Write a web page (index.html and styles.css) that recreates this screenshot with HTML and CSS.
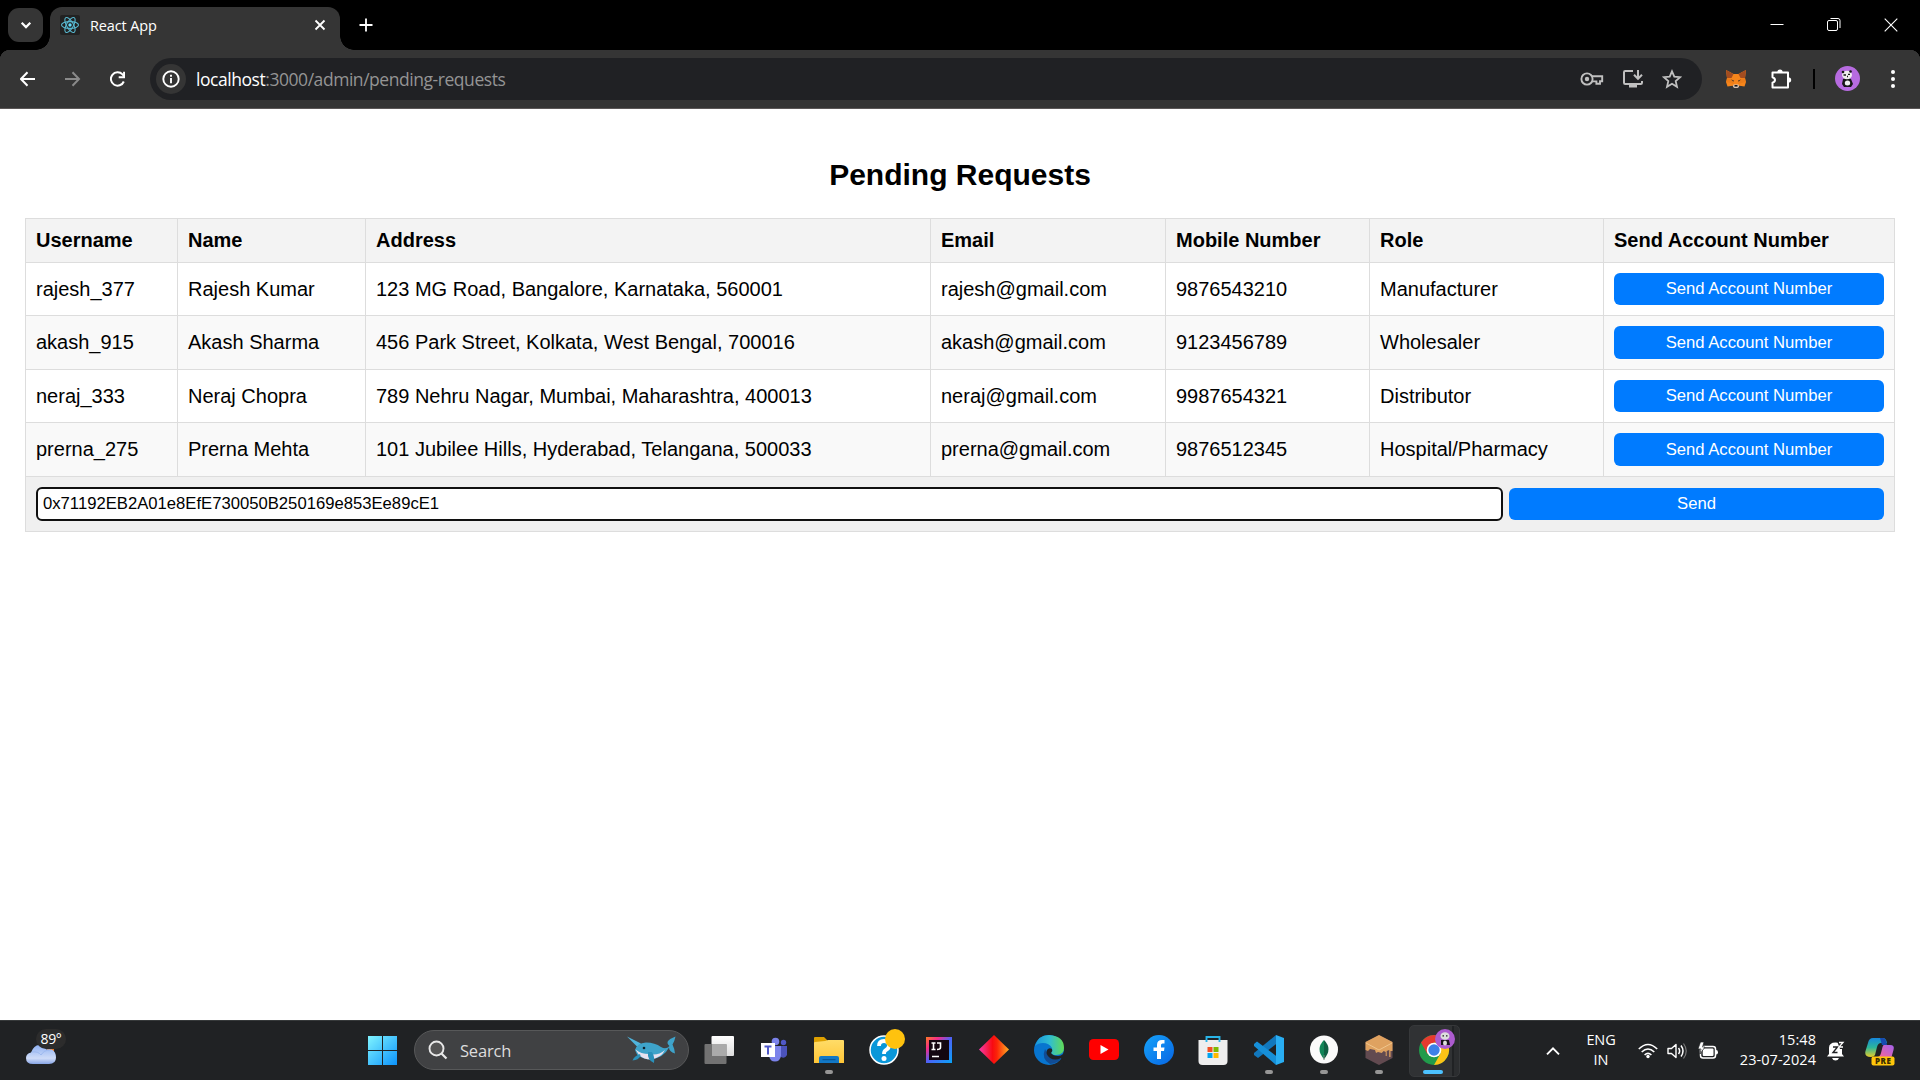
FILE: index.html
```html
<!DOCTYPE html>
<html lang="en">
<head>
<meta charset="utf-8">
<title>React App</title>
<link rel="stylesheet" href="styles.css">
</head>
<body>
<header class="tabstrip">
  <button class="tab-search" aria-label="Search tabs"><svg width="12" height="12" viewBox="0 0 12 12"><path d="M1.700 3.800 6 8.100l4.300-4.300" fill="none" stroke="#fff" stroke-width="2.200"/></svg></button>
  <div class="tab">
    <svg class="favicon" width="20" height="20" viewBox="0 0 20 20"><rect width="20" height="20" rx="2" fill="#222"/><g fill="none" stroke="#58b9d1" stroke-width="1.100"><ellipse cx="10" cy="10" rx="8.500" ry="3.400"/><ellipse cx="10" cy="10" rx="8.500" ry="3.400" transform="rotate(60 10 10)"/><ellipse cx="10" cy="10" rx="8.500" ry="3.400" transform="rotate(120 10 10)"/></g><circle cx="10" cy="10" r="1.700" fill="#61dafb"/></svg>
    <span class="tab-title">React App</span>
    <svg class="tab-close" width="12" height="12" viewBox="0 0 12 12"><path d="m1.500 1.500 9 9m0-9-9 9" stroke="#fff" stroke-width="1.800"/></svg>
  </div>
  <svg class="new-tab" width="14" height="14" viewBox="0 0 14 14"><path d="M7 .5v13M.5 7h13" stroke="#fff" stroke-width="1.800"/></svg>
  <div class="window-controls">
    <svg width="14" height="14" viewBox="0 0 14 14"><path d="M.5 6.500h13" stroke="#fff"/></svg>
    <svg width="14" height="14" viewBox="0 0 14 14"><rect x=".5" y="2.500" width="10" height="10" rx="1.500" fill="none" stroke="#fff"/><path d="M3.500.5H11q2 0 2 2V10" fill="none" stroke="#fff"/></svg>
    <svg width="14" height="14" viewBox="0 0 14 14"><path d="m.7.7 12.600 12.600m0-12.600L.7 13.300" stroke="#fff" stroke-width="1.100"/></svg>
  </div>
</header>
<nav class="toolbar">
  <svg class="nav-icon" width="16" height="16" viewBox="0 0 16 16"><path d="M15 8H1.500M7.500 1.300 1 8l6.500 6.700" fill="none" stroke="#fff" stroke-width="2"/></svg>
  <svg class="nav-icon" width="16" height="16" viewBox="0 0 16 16"><path d="M0 8h13.500M7.500 1.300 14 8l-6.500 6.700" fill="none" stroke="#8a8a8a" stroke-width="2"/></svg>
  <svg class="nav-icon reload" width="16" height="16" viewBox="0 0 16 16"><path d="M13.800 10.500A6.700 6.700 0 1 1 12.500 3.400l1.500 1.800" fill="none" stroke="#fff" stroke-width="2"/><path d="M15 .8v6.400H8.700V5.300h4.400V.8z" fill="#fff"/></svg>
  <div class="omnibox">
    <span class="site-info"><svg width="18" height="18" viewBox="0 0 18 18"><circle cx="9" cy="9" r="7.700" fill="none" stroke="#fff" stroke-width="1.900"/><path d="M9 8v5.200M9 4.800v2" stroke="#fff" stroke-width="1.900"/></svg></span>
    <span class="url"><b>localhost</b>:3000/admin/pending-requests</span>
    <svg width="24" height="14" viewBox="0 0 24 14"><g fill="none" stroke="#c0c0c0" stroke-width="1.900"><circle cx="7" cy="7" r="5.600"/><path d="M12 4.300h10.200v5h-2.200v2.500h-3.600V9.400H12"/></g><circle cx="7" cy="7" r="2.200" fill="#c0c0c0"/></svg>
    <svg width="22" height="20" viewBox="0 0 22 20"><path d="M11 2H3.200Q2 2 2 3.200v10.600Q2 15 3.200 15h15.600q1.200 0 1.200-1.200V12M16 1v8.500m-4-3.700 4 4 4-4" fill="none" stroke="#c0c0c0" stroke-width="2"/><path d="M7 15h8v3.500H7z" fill="#c0c0c0"/></svg>
    <svg width="20" height="20" viewBox="0 0 20 20"><path d="m10 2.300 2.300 5.400 5.800.5-4.400 3.900 1.300 5.700-5-3-5 3 1.300-5.700-4.400-3.900 5.800-.5z" fill="none" stroke="#c0c0c0" stroke-width="1.800"/></svg>
  </div>
  <svg class="fox" width="20" height="20" viewBox="0 0 20 20"><path d="m0 1 7.500 4h5L20 1l-1 8 1 4-1.500 4.500-5-.8-2 2h-3l-2-2-5 .8L0 13l1-4z" fill="#f6851b"/><path d="m0 1 7.500 4-2 4L1 9zm20 0-7.500 4 2 4L19 9z" fill="#a34c20"/><path d="m1 9 5 1 2 5-7.500-2zm18 0-5 1-2 5 7.500-2z" fill="#ec7c18"/><path d="m5 10.500 3 1-.5 1.200zm10 0-3 1 .5 1.200z" fill="#4a3325"/><path d="M7.500 15.500h5l.5 2.500-1.500 1h-3L7 18z" fill="#d5c3b5"/><path d="M8.500 16h3v1.600h-3z" fill="#161616"/></svg>
  <svg class="puzzle" width="22" height="22" viewBox="0 0 22 22"><path d="M2.500 4.500h15.500v15H2.500v-4.700c3.300-1.300 3.300-4.300 0-5.600z" fill="none" stroke="#fff" stroke-width="2" stroke-linejoin="round"/><path d="M7.300 4.500q0-3 2.700-3t2.700 3zM18 9.300q3.200 0 3.200 2.700T18 14.700z" fill="#fff"/></svg>
  <span class="toolbar-divider"></span>
  <svg class="avatar" width="25" height="25" viewBox="0 0 25 25"><circle cx="12.500" cy="12.500" r="12.500" fill="#b76be0"/><path d="M8 13q4-2 8 0l2 5-2 3H9l-2-3z" fill="#171717"/><ellipse cx="12" cy="9" rx="5" ry="4.200" fill="#f1eeee"/><ellipse cx="12.500" cy="17" rx="2.700" ry="2.500" fill="#eee"/><circle cx="8" cy="6" r="1.300" fill="#171717"/><circle cx="15.500" cy="5.500" r="1.300" fill="#171717"/><path d="M8.500 9h2.500m2-.7h2M12 10.500h1" stroke="#171717" stroke-width="1.300"/></svg>
  <svg class="menu-dots" width="4" height="18" viewBox="0 0 4 18"><circle cx="2" cy="2" r="2" fill="#fff"/><circle cx="2" cy="9" r="2" fill="#fff"/><circle cx="2" cy="16" r="2" fill="#fff"/></svg>
</nav>
<main class="page">
  <h2>Pending Requests</h2>
  <table class="requests">
    <colgroup><col class="c-user"><col class="c-name"><col class="c-address"><col class="c-email"><col class="c-mobile"><col class="c-role"><col class="c-send"></colgroup>
    <thead>
      <tr><th>Username</th><th>Name</th><th>Address</th><th>Email</th><th>Mobile Number</th><th>Role</th><th>Send Account Number</th></tr>
    </thead>
    <tbody>
      <tr class="short"><td>rajesh_377</td><td>Rajesh Kumar</td><td>123 MG Road, Bangalore, Karnataka, 560001</td><td>rajesh@gmail.com</td><td>9876543210</td><td>Manufacturer</td><td><button class="primary">Send Account Number</button></td></tr>
      <tr><td>akash_915</td><td>Akash Sharma</td><td>456 Park Street, Kolkata, West Bengal, 700016</td><td>akash@gmail.com</td><td>9123456789</td><td>Wholesaler</td><td><button class="primary tall">Send Account Number</button></td></tr>
      <tr class="short"><td>neraj_333</td><td>Neraj Chopra</td><td>789 Nehru Nagar, Mumbai, Maharashtra, 400013</td><td>neraj@gmail.com</td><td>9987654321</td><td>Distributor</td><td><button class="primary">Send Account Number</button></td></tr>
      <tr><td>prerna_275</td><td>Prerna Mehta</td><td>101 Jubilee Hills, Hyderabad, Telangana, 500033</td><td>prerna@gmail.com</td><td>9876512345</td><td>Hospital/Pharmacy</td><td><button class="primary tall">Send Account Number</button></td></tr>
      <tr class="send-row"><td colspan="7"><div class="send-form"><input class="account" type="text" value="0x71192EB2A01e8EfE730050B250169e853Ee89cE1"><button class="primary">Send</button></div></td></tr>
    </tbody>
  </table>
</main>
<footer class="taskbar">
  <div class="weather">
    <svg width="30" height="20" viewBox="0 0 30 20"><defs><linearGradient id="cloud" x1="0" y1="0" x2="0" y2="1"><stop offset="0" stop-color="#8fb1f2"/><stop offset=".7" stop-color="#cfdcf8"/><stop offset="1" stop-color="#87a5e6"/></linearGradient></defs><path d="M20 2h8v5h-6z" fill="#e8731a"/><path d="M7 19q-7 0-7-6 0-4.500 5-5.500Q8 0 13 0t7.500 4.500H26q4 2.500 4 8 0 6.500-7 6.500z" fill="url(#cloud)"/><path d="M6 7q6-1 9 3 3-5 9-5" fill="none" stroke="#9db9f0"/></svg>
    <span class="temperature">89°</span>
  </div>
  <div class="apps">
    <div class="app start"><svg width="30" height="30" viewBox="0 0 30 30"><defs><linearGradient id="win" x1="0" y1="0" x2="1" y2="1"><stop offset="0" stop-color="#80f4ff"/><stop offset="1" stop-color="#0c93fb"/></linearGradient></defs><path d="M1 1h14v14H1zM16 1h14v14H16zM1 16h14v14H1zM16 16h14v14H16z" fill="url(#win)"/></svg></div>
    <div class="search">
      <svg width="20" height="20" viewBox="0 0 20 20"><circle cx="8.500" cy="8.500" r="7" fill="#555" stroke="#e8e8e8" stroke-width="1.900"/><path d="m13.500 13.500 5 5" stroke="#e8e8e8" stroke-width="2.200"/></svg>
      <span>Search</span>
      <svg width="50" height="28" viewBox="0 0 50 28"><path d="m0 .5 14 7-3.500 3.500z" fill="#4fb4dc"/><path d="M8 14q2-7 11-7.500 9 0 15 4.500 5 3 8.500-1-3.500-3-1-5.500 2-2 7-4-1 5-3 8 2 4 2.500 9-6-2-6-6-5 10-18 12-8 0-14-5z" fill="#3ea3ca"/><path d="M8.500 13.500Q14 18 22 18q9 2 16-4-4 8-14 9.500-7 0-12-4.500z" fill="#e7e1ef"/><path d="M13 18q-6 2-7.500 6.500 6-.5 8-4.500zM21 16q-1 8 6 11 1-6-2-11z" fill="#2a91bb"/><circle cx="17" cy="12" r="1.300" fill="#10222d"/></svg>
    </div>
    <div class="app"><svg width="30" height="30" viewBox="0 0 30 30"><defs><linearGradient id="tv" x1="0" y1="0" x2="0" y2="1"><stop offset="0" stop-color="#fff"/><stop offset="1" stop-color="#ddd"/></linearGradient></defs><rect x="7.500" y="1" width="22.500" height="20" rx="1" fill="url(#tv)"/><rect x=".5" y="9" width="22" height="20" rx="1" fill="#727272"/><path d="M8 9h14.500v12H8z" fill="#aaa"/></svg></div>
    <div class="app"><svg width="30" height="30" viewBox="0 0 30 30"><circle cx="24.500" cy="7.500" r="2.700" fill="#5059c9"/><path d="M18 11h10v9q-2 4-6 2z" fill="#4b53bc"/><circle cx="16.500" cy="6.500" r="3.800" fill="#7b83eb"/><path d="M10 11h12v10q-1 5.500-6 5.500T10 21z" fill="#7b83eb"/><path d="M2 8h14v14H2z" fill="#fff"/><path d="M5.500 11.500h7m-3.500 0v8" stroke="#5059c9" stroke-width="2"/></svg></div>
    <div class="app running"><svg width="30" height="30" viewBox="0 0 30 30"><defs><linearGradient id="fold" x1="0" y1="0" x2="0" y2="1"><stop offset="0" stop-color="#ffdc68"/><stop offset="1" stop-color="#ffc637"/></linearGradient></defs><path d="M0 3q0-1 1-1h9l3 3v6H0z" fill="#dea000"/><path d="M0 8q0-1 1-1l10-1 3-1h15q1 0 1 1v22H0z" fill="url(#fold)"/><path d="M5 28v-5q0-2 2-2h16q2 0 2 2v5z" fill="#1278c6"/><path d="M8.500 24.700h13" stroke="#07518f"/></svg></div>
    <div class="app"><svg class="overflow-icon" width="30" height="30" viewBox="0 0 30 30"><circle cx="15" cy="15" r="14" fill="#0a97d9" stroke="#fff" stroke-width="1.500"/><path d="M10 11q0-5 5-5t5 4.500q0 3-3 4.500-2 1-2 4" fill="none" stroke="#fff" stroke-width="3.800"/><circle cx="15" cy="23.500" r="2.500" fill="#fff"/><circle cx="26" cy="4" r="10" fill="#ffc20e"/></svg></div>
    <div class="app"><svg width="30" height="30" viewBox="0 0 30 30"><defs><linearGradient id="ij" x1="0" y1="0" x2="1" y2="1"><stop offset="0" stop-color="#ff7a22"/><stop offset=".25" stop-color="#f52c8a"/><stop offset=".5" stop-color="#4d62f7"/><stop offset="1" stop-color="#08a5f8"/></linearGradient></defs><path d="M2 2h26v26H2z" fill="url(#ij)"/><path d="M5 5h20v20H5z" fill="#130711"/><path d="M7.500 8h4m-2 0v6.500m-2 0h4M13 8h3.500v4.500q0 2-3.500 2M8 21.500h7" fill="none" stroke="#fff" stroke-width="1.600"/></svg></div>
    <div class="app"><svg width="30" height="30" viewBox="0 0 30 30"><defs><linearGradient id="dia"><stop offset="0" stop-color="#f63cab"/><stop offset=".45" stop-color="#f80b12"/><stop offset=".6" stop-color="#fb2508"/><stop offset="1" stop-color="#ffae25"/></linearGradient></defs><path d="m15 0 15 14.500L15 29 0 14.500z" fill="url(#dia)"/></svg></div>
    <div class="app"><svg width="30" height="30" viewBox="0 0 30 30"><defs><linearGradient id="edge"><stop offset="0" stop-color="#1996dd"/><stop offset=".5" stop-color="#30bdd2"/><stop offset="1" stop-color="#62db55"/></linearGradient></defs><circle cx="15" cy="15" r="15" fill="#0875cf"/><path d="M1 11Q4 0 15 0q15 1 15 13 0 7-8 7-4 0-5-2 2-2 1-5-3-5-9-5-5 0-8 3z" fill="url(#edge)"/><path d="M11 14q-4 10 5 15 8 0 12-7-12 5-16-6z" fill="#114c94"/><path d="M17 18q2 3 7 3 3 0 5-2l1-3v12l-3-5q-6 3-11 0-5-4-3-8 2-3 5-1 1 2-1 4z" fill="#202224"/></svg></div>
    <div class="app"><svg width="30" height="30" viewBox="0 0 30 30"><rect y="4" width="30" height="21" rx="4.500" fill="#f00"/><path d="m11.500 10 8 4.500-8 4.500z" fill="#fff"/></svg></div>
    <div class="app"><svg width="30" height="30" viewBox="0 0 30 30"><defs><linearGradient id="fb" x1="0" y1="0" x2="1" y2="1"><stop offset="0" stop-color="#16a3f9"/><stop offset="1" stop-color="#0765e4"/></linearGradient></defs><circle cx="15" cy="15" r="15" fill="url(#fb)"/><path d="M13 24v-8H9.500v-3.500H13V10q0-5 5-5h2.500v3.500h-2Q17 8.500 17 10v2.500h3.500L20 16h-3v8z" fill="#fff"/></svg></div>
    <div class="app store"><svg width="30" height="30" viewBox="0 0 30 30"><path d="M.5 5H29.500v21q0 4-4 4h-21q-4 0-4-4z" fill="#eee"/><path d="M9.500 12h5v5h-5z" fill="#f25022"/><path d="M15.500 12h5v5h-5z" fill="#7fba00"/><path d="M9.500 18h5v5h-5z" fill="#00a4ef"/><path d="M15.500 18h5v5h-5z" fill="#ffb900"/><path d="M8.500 7V2h13v5" fill="none" stroke="#29b5e8" stroke-width="1.900"/></svg></div>
    <div class="app running"><svg width="30" height="30" viewBox="0 0 30 30"><path d="m22 0 1.500 8L4 23l-4-3v-2z" fill="#1278bd"/><path d="m0 11 0-2 3-2.500L23.500 22 22 30z" fill="#168fd8"/><path d="m22 0 8 3v24l-8 3z" fill="#29aef3"/></svg></div>
    <div class="app running"><svg width="30" height="30" viewBox="0 0 30 30"><circle cx="15" cy="14.500" r="14" fill="#fafafa"/><path d="M15 5q9 9 0 19z" fill="#0f5f43"/><path d="M15 5q-9 9 0 19z" fill="#118558"/><path d="M15 20v5" stroke="#72897a"/></svg></div>
    <div class="app running"><svg width="30" height="30" viewBox="0 0 30 30"><path d="m15 0 13.500 7v16L15 30 1.500 23V7z" fill="#624a50"/><path d="m15 0 13.500 7v9l-2 0v6h-1.300v-7l-2.500 1v5h-1v-4l-2-1-2 2-3.700-1-2 1-1-3-5-1-2 2-2.500-1V7z" fill="#dfa260"/><path d="m2 8 13 7 13-7" fill="none" stroke="#f0c68d"/></svg></div>
    <div class="app running active"><svg class="overflow-icon" width="30" height="30" viewBox="0 0 30 30"><circle cx="15" cy="15" r="15" fill="#219b4b"/><path d="M2 7.500Q7 0 15 0t13 7.500H15L8.500 19z" fill="#e63a2e"/><path d="M28 7.500A15 15 0 0 1 15 30l6.500-11.500L15 7.500z" fill="#fbc316"/><circle cx="15" cy="15" r="7.300" fill="#fff"/><circle cx="15" cy="15" r="5.700" fill="#3c80e8"/><circle cx="26" cy="4" r="10" fill="#ac5bcf"/><path d="M22 5h8l1 5h-9z" fill="#19141c"/><ellipse cx="26" cy="1" rx="4.500" ry="3.800" fill="#ddd"/><ellipse cx="26" cy="8" rx="2" ry="2.500" fill="#ddd"/><path d="M23.500.8H25m2 0h1.500" stroke="#222" stroke-width="1.300"/></svg></div>
  </div>
  <div class="tray">
    <svg width="14" height="10" viewBox="0 0 14 10"><path d="m1 8.300 6-6 6 6" fill="none" stroke="#fff" stroke-width="1.900"/></svg>
    <div class="language"><span>ENG</span><span>IN</span></div>
    <svg class="wifi" width="20" height="16" viewBox="0 0 20 16"><g fill="none" stroke="#fff" stroke-width="1.600"><path d="M.8 6q9.200-9 18.400 0M3.700 9q6.300-6 12.600 0M6.600 12q3.400-3.300 6.800 0"/></g><circle cx="10" cy="13.500" r="1.700" fill="#fff"/></svg>
    <svg class="speaker" width="21" height="18" viewBox="0 0 21 18"><path d="M1 6.500h3.500L9 2.500v13l-4.500-4H1z" fill="none" stroke="#fff" stroke-width="1.400" stroke-linejoin="round"/><path d="M11.500 6q2.300 3 0 6M14 3.500q4 5.500 0 11" fill="none" stroke="#fff" stroke-width="1.500"/><path d="M16.500 1.500q5.500 7.500 0 15" fill="none" stroke="#777" stroke-width="1.200"/></svg>
    <svg class="battery" width="21" height="18" viewBox="0 0 21 18"><rect x="2.500" y="4.500" width="15" height="11.500" rx="2.500" fill="none" stroke="#fff" stroke-width="1.500"/><rect x="4.700" y="6.500" width="10.800" height="7.500" rx="1" fill="#fff"/><path d="M18 8q2 0 2 2.300t-2 2.200z" fill="#fff"/><path d="M2.500 0 0 7h3l-1 5 5-7H4.500L6 0z" fill="#fff" stroke="#202224" stroke-width=".7"/></svg>
    <div class="clock"><span>15:48</span><span>23-07-2024</span></div>
    <svg class="bell" width="18" height="20" viewBox="0 0 18 20"><path d="M0 15.500 2 13V7q0-5.500 6.500-5.500T15 7v6l2 2.500zM5 17h7q-1 2.500-3.500 2.500T5 17z" fill="#fff"/><path d="M10 0h8v8h-5z" fill="#202224"/><path d="M6 6h4.500L6 11.500h4.500" fill="none" stroke="#202224" stroke-width="1.400"/><path d="M12 1.500h4L12 6h4" fill="none" stroke="#fff" stroke-width="1.300"/></svg>
    <svg class="copilot" width="30" height="30" viewBox="0 0 30 30"><defs><linearGradient id="cpa" x1="0" y1="0" x2="0" y2="1"><stop offset="0" stop-color="#1687dc"/><stop offset=".5" stop-color="#2cb69a"/><stop offset="1" stop-color="#e8cd29"/></linearGradient><linearGradient id="cpb" x1="1" y1="0" x2="0" y2="1"><stop offset="0" stop-color="#a362ee"/><stop offset="1" stop-color="#fa6593"/></linearGradient></defs><path d="M8 2h10q3 0 4 5h-6q-3 0-4 4l-2 8q-1 2-4 2-7 0-5.500-6L3 7q1-5 5-5z" fill="url(#cpa)"/><path d="M15 2h3q3 0 4 7h-5z" fill="#174bb1"/><path d="M19 9h6q5 0 3.500 5l-2 7H12q3 0 4-4l1.500-6q.5-2 1.500-2z" fill="url(#cpb)"/><rect x="6.500" y="20.500" width="23" height="9" rx="2" fill="#ffc60b"/><text x="18.200" y="28" text-anchor="middle" class="pre-label">PRE</text></svg>
  </div>
</footer>
</body>
</html>
```
FILE: styles.css
```css
* { box-sizing: border-box; }
body {
  margin: 0;
  width: 1920px;
  height: 1080px;
  overflow: hidden;
  display: flex;
  flex-direction: column;
  background: #fff;
  color: #000;
  font-family: "Liberation Sans", Arial, sans-serif;
}
svg { display: block; flex: none; }
button { border: 0; padding: 0; font: inherit; }

.tabstrip, .toolbar, .taskbar {
  font-family: "Open Sans", "Noto Sans", sans-serif;
  flex: none;
  display: flex;
  align-items: center;
}
.tabstrip { height: 50px; background: #000; color: #fff; padding-left: 8px; }
.tab-search {
  width: 35px;
  height: 34px;
  border-radius: 11px;
  background: #353535;
  display: flex;
  align-items: center;
  justify-content: center;
}
.tab {
  position: relative;
  align-self: flex-end;
  width: 290px;
  height: 43px;
  margin-left: 7px;
  padding: 0 14px 7px 10px;
  display: flex;
  align-items: center;
  background: #353535;
  border-radius: 12px 12px 0 0;
}
.tab::before, .tab::after {
  content: "";
  position: absolute;
  bottom: 0;
  width: 14px;
  height: 14px;
}
.tab::before { left: -14px; background: radial-gradient(circle at 0 0, transparent 13.500px, #353535 14px); }
.tab::after { right: -14px; background: radial-gradient(circle at 100% 0, transparent 13.500px, #353535 14px); }
.tab-title { margin-left: 10px; font-size: 14.500px; letter-spacing: -.12px; }
.tab-close { margin-left: auto; }
.new-tab { margin-left: 18.500px; }
.window-controls { margin-left: auto; display: flex; gap: 43px; padding-right: 22px; }

.toolbar {
  height: 59px;
  padding: 0 21px 1px 20px;
  border-bottom: 1px solid #5b5757;
  background:
    radial-gradient(circle at 10px 10px, #353535 10px, #000 10.500px) 0 0 / 10px 10px no-repeat,
    radial-gradient(circle at 0 10px, #353535 10px, #000 10.500px) 100% 0 / 10px 10px no-repeat,
    #353535;
}
.nav-icon { margin-right: 29px; }
.nav-icon.reload { margin-right: 24px; }
.omnibox {
  width: 1552px;
  height: 42px;
  padding: 0 20px 0 6px;
  display: flex;
  align-items: center;
  border-radius: 21px;
  background: #202124;
}
.site-info {
  width: 30px;
  height: 30px;
  border-radius: 50%;
  background: #353535;
  display: flex;
  align-items: center;
  justify-content: center;
}
.url { margin: 1px auto 0 10px; font-size: 17.500px; letter-spacing: -.45px; color: #949494; }
.url b { color: #fff; font-weight: 400; }
.omnibox svg + svg { margin-left: 18px; }
.fox { margin-left: 24px; }
.puzzle { margin-left: 24px; }
.toolbar-divider { width: 2px; height: 20px; margin-left: 21px; background: #000; }
.avatar { margin-left: 20px; }
.menu-dots { margin-left: auto; margin-right: 4px; }

.page { flex: 1; padding: 24px 25px 0; }
h2 { margin: 24px 0 26px; font-size: 30px; line-height: 35px; text-align: center; }
.requests { width: 1869px; table-layout: fixed; border-collapse: collapse; font-size: 20px; line-height: 23px; }
.c-user { width: 152px; }
.c-name { width: 188px; }
.c-address { width: 565px; }
.c-email { width: 235px; }
.c-mobile { width: 204px; }
.c-role { width: 234px; }
.c-send { width: 291px; }
.requests th, .requests td { border: 1px solid #ddd; padding: 0 10px; text-align: left; height: 54px; }
.requests th { background: #f3f3f3; height: 44px; }
.requests .short td { height: 53px; }
.requests tr:nth-child(even) td { background: #f9f9f9; }
.requests .send-row td { height: 55px; background: #f0f0f0; }
.primary {
  display: block;
  width: 100%;
  height: 32px;
  border-radius: 6px;
  background: #007bff;
  color: #fff;
  font-size: 16.667px;
  line-height: 20px;
}
.primary.tall { height: 33px; }
.send-form { display: flex; gap: 6px; }
.send-form .primary { width: 375px; }
.account {
  flex: 1;
  height: 34px;
  margin: -1px 0;
  padding: 0 5px 1px;
  border: 2px solid #101010;
  border-radius: 6px;
  background: #fff;
  outline: none;
  font: 16.667px "Liberation Sans", Arial, sans-serif;
}

.taskbar { height: 60px; background: #202224; border-top: 1px solid #36393a; color: #fff; padding: 0 25px 0 26px; }
.weather { position: relative; width: 329px; height: 59px; padding-top: 24px; }
.temperature {
  position: absolute;
  left: 10px;
  top: 8px;
  width: 30px;
  height: 20px;
  border-radius: 10px;
  background: #2c2c2c;
  font-size: 14px;
  line-height: 20px;
  text-align: center;
  letter-spacing: -.3px;
}
.apps { display: flex; align-items: center; height: 59px; }
.app { position: relative; width: 55px; height: 59px; display: flex; justify-content: center; padding-top: 14px; }
.start { padding-right: 2px; }
.store { padding-right: 1px; }
.overflow-icon { overflow: visible; }
.running::after {
  content: "";
  position: absolute;
  left: 24px;
  top: 49px;
  width: 8px;
  height: 4px;
  border-radius: 2px;
  background: #969696;
}
.active::before {
  content: "";
  position: absolute;
  left: 3px;
  top: 4px;
  width: 49px;
  height: 50px;
  border: 1px solid #36383a;
  border-radius: 5px;
  background: linear-gradient(90deg, #303234 42px, #202224 42px, #202224 44px, #2b2d2f 44px);
}
.active svg { position: relative; }
.active::after { left: 17px; width: 20px; background: #4cc2ff; }
.search {
  width: 275px;
  height: 40px;
  margin: 0 2px 1px 4px;
  padding: 0 11px 0 13px;
  border: 1px solid #575859;
  border-radius: 20px;
  background: #404143;
  display: flex;
  align-items: center;
}
.search span { margin: 0 auto 0 12px; font-size: 16.500px; letter-spacing: -.2px; color: #ddd; }
.tray { margin-left: auto; display: flex; align-items: center; font-size: 14.500px; line-height: 20px; }
.language, .clock { display: flex; flex-direction: column; }
.language { width: 30px; margin-left: 26px; margin-top: -1px; align-items: center; letter-spacing: -.1px; }
.wifi { margin-left: 22px; }
.speaker { margin-left: 9px; }
.battery { margin-left: 10px; }
.clock { width: 80px; margin-left: 17px; margin-top: -2px; align-items: flex-end; letter-spacing: .05px; }
.bell { margin-left: 11px; }
.copilot { margin-left: 20px; margin-top: 1px; }
.pre-label { font: 800 8px "Open Sans", sans-serif; fill: #3a2c00; letter-spacing: .5px; }
```
